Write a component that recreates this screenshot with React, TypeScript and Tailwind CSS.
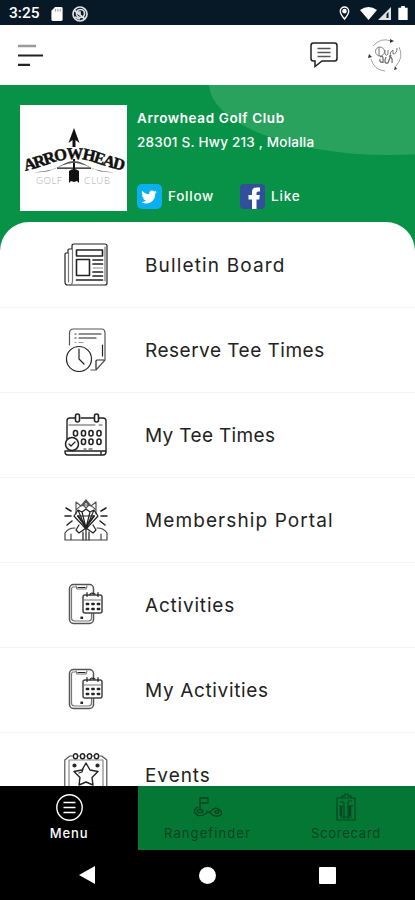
import type { ReactNode } from 'react';

function LineIcon({ children }: { children: ReactNode }) {
  return (
    <svg
      className="h-11 w-11 shrink-0"
      viewBox="0 0 44 44"
      fill="none"
      stroke="#222"
      strokeWidth="1.2"
      strokeLinecap="round"
      strokeLinejoin="round"
    >
      {children}
    </svg>
  );
}

function NewsIcon() {
  return (
    <LineIcon>
      <path d="M10 1h31q2 0 2 2v37q0 2-2 2H4q-3 0-3-3V11q0-1 1-1h2V7q0-1 1-1h3V3q0-2 2-2z" />
      <path d="M8.500 6v32q0 4-3 4M4.500 10v29M41 4v34" stroke="#777" />
      <path d="M12.500 7h26v6h-26zM12.500 16.500h13v16h-13z" strokeWidth="1.600" />
      <path d="M29 17h9.500M29 21h9.500M29 29h9.500M29 33h9.500M12.500 37h26" strokeWidth="1.700" />
      <path d="M29 25h9.500" stroke="#888" />
    </LineIcon>
  );
}

function ReserveIcon() {
  return (
    <LineIcon>
      <path d="M5.500 17V5q0-4 4-4h28q3.500 0 3.500 4v27l-9 10h-5" stroke="#555" />
      <path d="M32 41v-8q0-1 1-1h7M38.500 17v11" />
      <path d="M11 6h1M15 6h22M11 10h1M15 10h17" />
      <path d="M11 14.500h1M15 14.500h4" stroke="#999" />
      <circle cx="15" cy="31" r="12.500" />
      <path d="M15 21v10l5 5" />
    </LineIcon>
  );
}

function CalendarIcon() {
  return (
    <LineIcon>
      <path d="M3 26V8q0-3 3-3h5M17 5h13M35 5h4q3 0 3 3v31q0 3-3 3H4q-3 0-3-3v-1h36v3M42 38h-4" strokeWidth="1.400" />
      <path d="M5 12h26M35 12h3" stroke="#555" />
      <rect x="11.500" y="1" width="4" height="8" rx="2" strokeWidth="1.600" />
      <rect x="30.500" y="1" width="4" height="8" rx="2" strokeWidth="1.600" />
      <g strokeWidth="1.600">
        {[11.500, 19.500, 27, 35].map((x) => (
          <rect key={x} x={x - 2} y="17.500" width="4" height="5.500" rx="2" />
        ))}
        {[19.500, 27, 35].map((x) => (
          <rect key={x} x={x - 2} y="26" width="4" height="5.500" rx="2" />
        ))}
      </g>
      <circle cx="8" cy="31" r="6.500" fill="white" strokeWidth="1.500" />
      <path d="m5 31 2 2 4-4M20 36h2M25 36h3" />
    </LineIcon>
  );
}

function MemberIcon() {
  return (
    <LineIcon>
      <path d="M12 16V4l5 4 5-6 5 6 5-4v12M12 12q4-5 10-5t10 5M19 7l3 3 3-3-3-3z" stroke="#555" />
      <path d="M10 18l4-6 4 2 4-3 4 3 4-2 4 6-12 13zM14 18h16M14 12l8 19 8-19M18 14l4 16 4-16" />
      <path d="m14 18 8 11 8-11" strokeWidth="2" />
      <path d="m15 27-3 5 3 3 7-5 7 5 3-3-3-5M22 31v11M19 34v8M25 34v8" />
      <path d="M1 42v-7q3-5 10-5M43 42v-7q-3-5-10-5M1 42h42M7 36v6M37 36v6" stroke="#444" />
      <path d="m2 10 5 3M1 18h6M3 27l5-4M42 10l-5 3M43 18h-6M41 27l-5-4" strokeWidth="1.500" />
    </LineIcon>
  );
}

function ActivityIcon() {
  return (
    <LineIcon>
      <rect x="5.500" y="1.500" width="24" height="39" rx="4" stroke="#555" strokeWidth="1.500" />
      <path d="M11 4H9Q7.500 4 7.500 7v28q0 3 3 3h14q3 0 3-3v-5M12 3l1 3h9l1-3" stroke="#777" />
      <path d="M14 4.500h7M17 34h1.500v1.500H17z" />
      <rect x="19" y="12" width="19" height="18" rx="2" fill="white" stroke="#444" strokeWidth="1.500" />
      <path d="M19 17h19" stroke="#777" />
      <path d="M23 9.500v4M34 9.500v4M26 12q0-3 5-1" />
      <path d="M22.500 20.500h2v1h-2zM28 20.500h2v1h-2zM33.500 20.500h2v1h-2zM22.500 25.500h2v1h-2zM28 25.500h2v1h-2zM33.500 25.500h2v1h-2z" strokeWidth="1.600" />
    </LineIcon>
  );
}

function EventIcon() {
  return (
    <LineIcon>
      <path d="M0.800 44V7l5-4h32l5 4v37" stroke="#555" />
      <path d="M5 44V7h34v37" stroke="#888" />
      <g fill="white" strokeWidth="1.400">
        {[11, 18, 25, 32].map((x) => (
          <rect key={x} x={x - 1.500} y="0.700" width="4" height="5" rx="2" />
        ))}
      </g>
      <circle cx="10.500" cy="12.500" r="1.500" fill="#222" />
      <circle cx="33.500" cy="12.500" r="1.500" fill="#222" />
      <path d="m22 10 4 7 8 1.500-6 6 1 7.500-7-3-7 3 1-7.500-6-6 8-1.500z" strokeWidth="1.400" />
      <path d="m15 20 3-1 1-3" />
    </LineIcon>
  );
}

const menu = [
  { label: 'Bulletin Board', icon: <NewsIcon />, spacing: 'tracking-[1.15px]' },
  { label: 'Reserve Tee Times', icon: <ReserveIcon />, spacing: 'tracking-[0.5px]' },
  { label: 'My Tee Times', icon: <CalendarIcon />, spacing: 'tracking-[0.35px]' },
  { label: 'Membership Portal', icon: <MemberIcon />, spacing: 'tracking-[1.1px]' },
  { label: 'Activities', icon: <ActivityIcon />, spacing: 'tracking-[0.8px]' },
  { label: 'My Activities', icon: <ActivityIcon />, spacing: 'tracking-[0.65px]' },
  { label: 'Events', icon: <EventIcon />, spacing: 'tracking-[0.95px]' },
];

function StatusBar() {
  return (
    <div className="flex h-[25px] items-center justify-between bg-[#071827] pl-[9px] pr-[7px] text-white">
      <div className="flex items-center pt-[2px]">
        <span className="w-[42px] font-[Roboto] text-[15.500px] font-medium leading-none">3:25</span>
        <svg className="h-[14px] w-3" viewBox="0 0 12 15">
          <path d="M4 0h6.500Q12 0 12 1.500v12q0 1.500-1.500 1.500h-9Q0 15 0 13.500V4z" fill="#fff" />
          <path d="M4.500 2v3M7 2v3M9.500 2v3" stroke="#8c9399" />
        </svg>
        <svg className="ml-[9px] h-4 w-4" viewBox="0 0 16 16" fill="none" stroke="#dce0e3" strokeWidth="1.700">
          <circle cx="8" cy="8" r="7" />
          <circle cx="8.500" cy="7.500" r="4" />
          <path d="m2 4 11 9M3 11l5 2M5 6h3v3" />
        </svg>
      </div>
      <div className="flex items-center pt-px">
        <svg className="mr-[10px] h-[14px] w-[11px]" viewBox="0 0 11 15" fill="none" stroke="#fff" strokeWidth="1.500">
          <path d="M5.500 14Q1 8.500 1 5.500a4.500 4.500 0 0 1 9 0q0 3-4.500 8.500z" />
          <circle cx="5.500" cy="5.500" r="1.700" fill="#fff" />
        </svg>
        <svg className="h-[13px] w-[17px]" viewBox="0 0 17 13">
          <path d="M0 3q8.500-6 17 0L8.500 13z" fill="#fff" />
        </svg>
        <svg className="ml-px h-[13px] w-[14px]" viewBox="0 0 14 13">
          <path d="M13 0v13H0z" fill="#dfe2e4" />
          <path d="M10.500 5v6h-2V7z" fill="#071827" />
        </svg>
        <svg className="ml-[6px] h-[14px] w-[10px]" viewBox="0 0 10 15">
          <path d="M3 0h4v2h3v13H0V2h3z" fill="#fff" />
        </svg>
      </div>
    </div>
  );
}

function TopBar() {
  return (
    <header className="flex h-[60px] items-center justify-between bg-white pl-[17px] pr-[13px]">
      <svg className="h-[24px] w-[27px]" viewBox="0 0 27 24">
        <path d="M1 3h18" stroke="#999" strokeWidth="2.500" />
        <path d="M1 12.500h25M1 21.800h12" stroke="#222" strokeWidth="2.200" />
      </svg>
      <div className="flex items-center">
        <svg className="mr-[30px] h-[26px] w-7" viewBox="0 0 28 26" fill="none" stroke="#222" strokeWidth="1.500">
          <path d="M3.500 1h21Q27 1 27 3.500v13q0 2.500-2.500 2.500H12l-7 5.500V19H3.500Q1 19 1 16.500v-13Q1 1 3.500 1z" />
          <path d="M7.500 6.500h13M7.500 10.500h13M7.500 14.500h13" stroke="#555" />
        </svg>
        <svg className="h-[34px] w-[34px]" viewBox="0 0 34 34" fill="none" stroke="#999" strokeWidth="0.900">
          <path d="M5 8q8-9 18-5M31 9q5 10-3 19M17 33Q6 32 3 21" />
          <path d="m22 1 4 2-4 2zM29 31l-3 1 1-4zM0 20l1-4 3 3z" fill="#333" stroke="none" />
          <circle cx="12" cy="13.500" r="4.500" stroke="#777" />
          <path d="M11 9v9M17 12v4q2 3 3-1v-3M22 18q0-5 3-6v4q4 0 4-6" stroke="#666" />
          <path d="M12 19q4-3 3 6M15 24q-4 1-3-3M18 19q-3 7 2 6l3-8M21 18q4 1 3 7" stroke="#666" strokeWidth="1.200" />
        </svg>
      </div>
    </header>
  );
}

function ClubLogo() {
  return (
    <svg className="h-[106px] w-[107px] shrink-0 bg-white" viewBox="0 0 107 106">
      <path id="logo-arc" d="M5 66C30 60 36 54 54 54S78 60 105 66" fill="none" />
      <path d="m54 23 5.500 15-4-3v7h-3v-7l-4 3z" fill="#111" />
      <path d="M53 54h2v14h-2zM37 62.500h34v1.300H37zM49 66q5-4 10 0v12l-2-2-3 1-3-1-2 2z" fill="#111" />
      <path d="M14 67C36 69 42 56 54 56S72 69 94 67C73 67 66 58 54 58S35 67 14 67z" fill="#555" />
      <text
        fill="#111"
        stroke="#111"
        strokeWidth="0.500"
        fontFamily="Liberation Serif"
        fontSize="16.500"
        fontWeight="700"
      >
        <textPath href="#logo-arc" textLength="102" lengthAdjust="spacing">ARROWHEAD</textPath>
      </text>
      <g fill="#aaa" fontFamily="Lato" fontSize="9.500" fontWeight="300">
        <text x="16" y="78.500" textLength="26">GOLF</text>
        <text x="64" y="78.500" textLength="26">CLUB</text>
      </g>
    </svg>
  );
}

function ClubHeader() {
  return (
    <section className="relative flex h-[137px] gap-[10px] overflow-hidden pl-5 pt-5 text-white">
      <div className="absolute -top-[73px] left-[209px] h-[143px] w-[360px] rounded-[50%] bg-[#29a25e]" />
      <ClubLogo />
      <div className="relative">
        <h1 className="mt-[3px] w-max text-[13.500px] font-semibold leading-5 tracking-[0.6px]">Arrowhead Golf Club</h1>
        <p className="mt-1 w-max text-[13.500px] font-medium leading-5 tracking-[0.22px]">28301 S. Hwy 213 , Molalla</p>
        <div className="mt-[31px] flex h-[26px] items-center text-[13.500px] font-medium">
          <svg className="mr-[6px] h-[25px] w-[25px]" viewBox="0 0 25 25">
            <rect width="25" height="25" rx="5" fill="#09afef" />
            <path
              d="M20 8c-.7.300-1.200.5-2 .5.700-.4 1.100-1 1.400-1.700-.7.400-1.400.6-2.100.8-2.200-2.200-5.800-.6-5.100 2.700-2.800-.1-5.200-1.400-6.900-3.500-.9 1.600-.5 3.600 1 4.600l-1.400-.4c0 1.600 1.100 2.900 2.700 3.300h-1.500c.5 1.300 1.700 2.200 3.100 2.300a7 7 0 0 1-4.800 1.300c6.700 4 14-.6 13.800-8.200L20 8z"
              fill="#fff"
            />
          </svg>
          <span className="w-[72px] tracking-[0.75px]">Follow</span>
          <svg className="mr-[6px] h-[25px] w-[25px]" viewBox="0 0 25 25">
            <rect width="25" height="25" rx="4" fill="#314f9b" />
            <path d="M12 25v-9.500H8.500V11H12V8q0-4.500 4.500-4.500H20v4h-2q-1.500 0-1.500 1.500v2h3.300l-.5 4.500h-2.800V25z" fill="#fff" />
          </svg>
          <span className="tracking-[0.8px]">Like</span>
        </div>
      </div>
    </section>
  );
}

function BottomNav() {
  return (
    <nav className="flex h-16 shrink-0 bg-[#057735] text-[13px] leading-4 text-[#07441f]">
      <div className="flex w-[138px] flex-col items-center bg-black pt-[7px] text-white">
        <svg className="h-[28px] w-[28px]" viewBox="0 0 28 28" fill="none" stroke="#fff" strokeWidth="1.400">
          <circle cx="14.500" cy="14.500" r="12.700" />
          <path d="M8.500 9.500h12M8.500 14.500h12M8.500 19.500h12" />
        </svg>
        <span className="mt-1 font-medium tracking-[0.9px]">Menu</span>
      </div>
      <div className="flex w-[139px] flex-col items-center pt-[7px]">
        <svg className="h-[28px] w-[30px]" viewBox="0 0 30 28" fill="none" stroke="currentColor" strokeWidth="1.300">
          <path d="M7 18V5h8v5H7M5 14q-5 2-3 6 3 4 8 2l8-4q4-5 9-1 4 5-2 6-4 1-8-3l-4-2" />
          <ellipse cx="7" cy="18" rx="3" ry="1.700" />
          <ellipse cx="24" cy="19" rx="2" ry="1.300" />
        </svg>
        <span className="mt-1 tracking-[1.1px]">Rangefinder</span>
      </div>
      <div className="flex w-[138px] flex-col items-center pt-[7px]">
        <svg className="h-[28px] w-[22px]" viewBox="0 0 22 28" fill="none" stroke="currentColor" strokeWidth="1.200">
          <path d="M2 5h18v22H2zM7 5V3h3V1h3v2h3v2M5 9h4M13 8h4M4 13h4M14 13h4M9 9v17M13 9v17M5 24h12" />
          <path d="M6 13v10M15 13v10" strokeWidth="2.500" />
        </svg>
        <span className="mt-1 tracking-[0.75px]">Scorecard</span>
      </div>
    </nav>
  );
}

export default function App() {
  return (
    <div className="flex h-[900px] w-[415px] flex-col overflow-hidden bg-white font-[Inter,sans-serif]">
      <StatusBar />
      <TopBar />
      <main className="min-h-0 flex-1 overflow-hidden bg-[#079247]">
        <ClubHeader />
        <div className="rounded-t-[29px] bg-white pt-px">
          {menu.map((item) => (
            <div key={item.label} className="flex h-[85px] items-center gap-[37px] border-b border-[#f5f5f5] pl-16">
              {item.icon}
              <span className={`whitespace-nowrap pt-[2px] text-[19px] text-[#222] ${item.spacing}`}>{item.label}</span>
            </div>
          ))}
        </div>
      </main>
      <BottomNav />
      <div className="flex h-[50px] shrink-0 items-center justify-between bg-black pl-[79px] pr-[79px]">
        <svg className="h-[18px] w-[17px]" viewBox="0 0 17 18"><path d="M16 0v18L0 9z" fill="#fff" /></svg>
        <div className="h-[17px] w-[17px] rounded-full bg-white" />
        <div className="h-[17px] w-[17px] rounded-[1px] bg-white" />
      </div>
    </div>
  );
}
